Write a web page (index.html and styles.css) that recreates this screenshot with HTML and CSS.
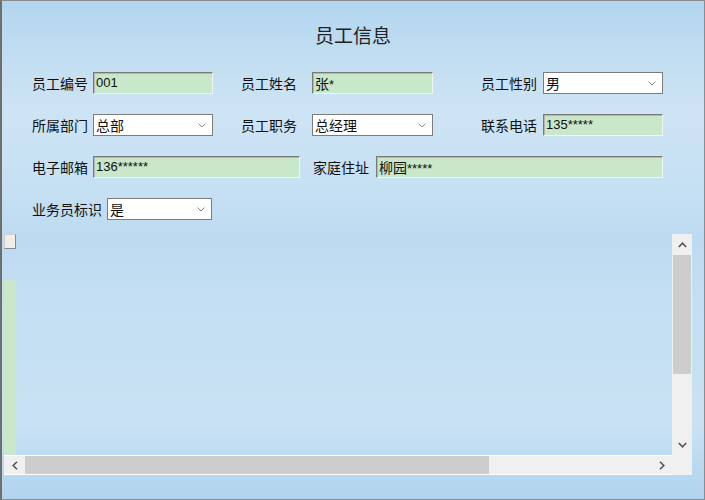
FILE: index.html
```html
<!DOCTYPE html>
<html lang="zh-CN">
<head>
  <meta charset="UTF-8">
  <title>员工信息</title>
  <link rel="stylesheet" href="styles.css">
</head>
<body>
  <div class="window">
    <div class="title">员工信息</div>

    <div class="form">
      <div class="row">
        <label class="lbl w61">员工编号</label>
        <div class="input w120">001</div>
        <label class="lbl w71 ml28">员工姓名</label>
        <div class="input w121"><span class="cn">张</span>*</div>
        <label class="lbl w62 ml48">员工性别</label>
        <div class="select w120"><span class="cn">男</span><svg class="drop" width="8" height="5" viewBox="0 0 8 5"><path d="M0.5 0.5 L4 4 L7.5 0.5" fill="none" stroke="#8a8a8a" stroke-width="1"/></svg></div>
      </div>

      <div class="row">
        <label class="lbl w61">所属部门</label>
        <div class="select w120"><span class="cn">总部</span><svg class="drop" width="8" height="5" viewBox="0 0 8 5"><path d="M0.5 0.5 L4 4 L7.5 0.5" fill="none" stroke="#8a8a8a" stroke-width="1"/></svg></div>
        <label class="lbl w71 ml28">员工职务</label>
        <div class="select w121"><span class="cn">总经理</span><svg class="drop" width="8" height="5" viewBox="0 0 8 5"><path d="M0.5 0.5 L4 4 L7.5 0.5" fill="none" stroke="#8a8a8a" stroke-width="1"/></svg></div>
        <label class="lbl w62 ml48">联系电话</label>
        <div class="input w120">135*****</div>
      </div>

      <div class="row">
        <label class="lbl w61">电子邮箱</label>
        <div class="input w207">136******</div>
        <label class="lbl w63 ml13">家庭住址</label>
        <div class="input w287"><span class="cn">柳园</span>*****</div>
      </div>

      <div class="row">
        <label class="lbl w75">业务员标识</label>
        <div class="select w105"><span class="cn">是</span><svg class="drop" width="8" height="5" viewBox="0 0 8 5"><path d="M0.5 0.5 L4 4 L7.5 0.5" fill="none" stroke="#8a8a8a" stroke-width="1"/></svg></div>
      </div>
    </div>

    <div class="panel">
      <div class="view">
        <div class="check"></div>
        <div class="strip"></div>
      </div>
      <div class="vbar">
        <div class="arrow"><svg width="9" height="6" viewBox="0 0 9 6"><path d="M0.8 5 L4.5 1.2 L8.2 5" fill="none" stroke="#555" stroke-width="1.6"/></svg></div>
        <div class="vthumb"></div>
        <div class="vtrack"></div>
        <div class="arrow"><svg width="9" height="6" viewBox="0 0 9 6"><path d="M0.8 1 L4.5 4.8 L8.2 1" fill="none" stroke="#555" stroke-width="1.6"/></svg></div>
      </div>
      <div class="hbar">
        <div class="arrow"><svg width="6" height="9" viewBox="0 0 6 9"><path d="M5 0.8 L1.2 4.5 L5 8.2" fill="none" stroke="#555" stroke-width="1.6"/></svg></div>
        <div class="hthumb"></div>
        <div class="htrack"></div>
        <div class="arrow"><svg width="6" height="9" viewBox="0 0 6 9"><path d="M1 0.8 L4.8 4.5 L1 8.2" fill="none" stroke="#555" stroke-width="1.6"/></svg></div>
      </div>
      <div class="corner"></div>
    </div>
  </div>
</body>
</html>
```

FILE: styles.css
```css
* {
  box-sizing: border-box;
}

body {
  margin: 0;
  font-family: "Noto Sans CJK SC", sans-serif;
  color: #111;
}

.window {
  width: 705px;
  height: 500px;
  border: 1px solid #8c8c8c;
  border-left: 2px solid #6f6f6f;
  background: linear-gradient(
    to bottom,
    #b2d6f0 0%,
    #c3def2 12%,
    #cde4f4 22%,
    #c6e0f3 38%,
    #bcdaf1 48%,
    #c4dff3 60%,
    #c9e2f4 85%,
    #b5d7ef 96%,
    #b2d5ee 100%
  );
}

.title {
  padding-top: 21px;
  height: 48px;
  line-height: 26px;
  text-align: center;
  font-size: 19px;
  color: #222;
}

.form {
  padding-left: 30px;
  padding-top: 23px;
  display: flex;
  flex-direction: column;
  gap: 20px;
}

.row {
  display: flex;
  align-items: center;
  height: 22px;
}

.lbl {
  font-size: 14px;
  line-height: 22px;
  white-space: nowrap;
}

.input,
.select {
  height: 22px;
  font-family: "Liberation Sans", "Noto Sans CJK SC", sans-serif;
  font-size: 13px;
  line-height: 20px;
  padding-left: 2px;
  white-space: nowrap;
}

.input {
  background: #c9e7c9;
  border: 1px solid;
  border-color: #7a7a7a #f4f4f4 #f4f4f4 #7a7a7a;
  box-shadow: inset 1px 1px 0 #b4b4b4;
}

.select {
  position: relative;
  background: #fff;
  border: 1px solid #7c7c7c;
}

.cn {
  font-family: "Noto Sans CJK SC", sans-serif;
  font-size: 14px;
}

.drop {
  position: absolute;
  right: 6px;
  top: 8px;
}

.w61 { width: 61px; }
.w62 { width: 62px; }
.w63 { width: 63px; }
.w71 { width: 71px; }
.w75 { width: 75px; }
.w105 { width: 105px; }
.w120 { width: 120px; }
.w121 { width: 121px; }
.w207 { width: 207px; }
.w287 { width: 287px; }
.ml13 { margin-left: 13px; }
.ml28 { margin-left: 28px; }
.ml48 { margin-left: 48px; }

.panel {
  margin: 14px 0 0 2px;
  width: 688px;
  height: 241px;
  display: grid;
  grid-template-columns: 668px 20px;
  grid-template-rows: 221px 20px;
}

.view {
  display: flex;
  flex-direction: column;
}

.check {
  width: 12px;
  height: 15px;
  background: linear-gradient(#f6ecea, #ecece8);
  border: 1px solid #8a8a8a;
  border-top-color: #d0d0d0;
  border-left-color: #d0d0d0;
}

.strip {
  margin-top: 31px;
  width: 12px;
  flex: 1;
  background: #c9e7c9;
}

.vbar {
  background: #f0f0f0;
  display: flex;
  flex-direction: column;
}

.vbar .arrow {
  height: 21px;
  display: flex;
  align-items: center;
  justify-content: center;
}

.vthumb {
  height: 119px;
  margin: 0 1px;
  background: #cdcdcd;
}

.vtrack {
  flex: 1;
}

.hbar {
  background: #f0f0f0;
  border-top: 1px solid #fff;
  border-bottom: 1px solid #fff;
  display: flex;
}

.hbar .arrow {
  width: 21px;
  display: flex;
  align-items: center;
  justify-content: center;
}

.hthumb {
  width: 464px;
  background: #cdcdcd;
}

.htrack {
  flex: 1;
}

.corner {
  background: #f0f0f0;
}
```
